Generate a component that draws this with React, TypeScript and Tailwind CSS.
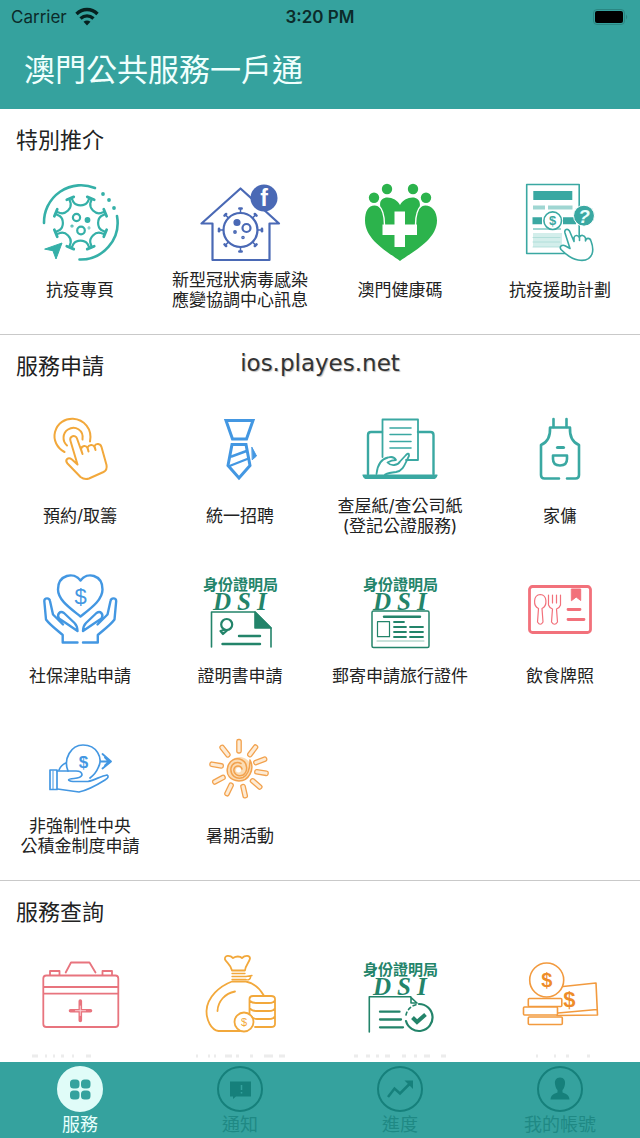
import type { ReactNode } from 'react';

const TEAL = '#3aa8a2';
const BLUE = '#4397e2';
const ORANGE = '#f2a83b';
const GREEN = '#23846a';
const RED = '#f2717b';

function Svg({ color, width = 1.8, children }: { color: string; width?: number; children: ReactNode }) {
  return (
    <svg
      viewBox="0 0 80 80"
      className="size-20 shrink-0 overflow-visible"
      fill="none"
      stroke={color}
      strokeWidth={width}
      strokeLinecap="round"
      strokeLinejoin="round"
      aria-hidden="true"
    >
      {children}
    </svg>
  );
}

function point(cx: number, cy: number, r: number, deg: number) {
  const a = (deg * Math.PI) / 180;
  return `${(cx + r * Math.cos(a)).toFixed(2)} ${(cy + r * Math.sin(a)).toFixed(2)}`;
}

function Dollar({ x, y, size, color, bold = true }: { x: number; y: number; size: number; color: string; bold?: boolean }) {
  return (
    <text
      x={x}
      y={y + size * 0.35}
      fontSize={size}
      textAnchor="middle"
      fill={color}
      stroke="none"
      fontFamily="Liberation Sans, sans-serif"
      fontWeight={bold ? 700 : 400}
    >
      $
    </text>
  );
}

function VirusPageIcon() {
  const cx = 40.5;
  const cy = 40;
  const angles = [0, 1, 2, 3, 4, 5, 6, 7].map((i) => 22.5 + i * 45);
  const body = angles
    .map((a) => `M${point(cx, cy, 26.5, a + 2.5)} L${point(cx, cy, 22, a + 4)} C${point(cx, cy, 17, a + 9)} ${point(cx, cy, 17, a + 36)} ${point(cx, cy, 22, a + 41)} L${point(cx, cy, 26.5, a + 42.5)}`)
    .join(' ');
  const caps = angles.map((a) => `M${point(cx, cy, 27, a - 8)} L${point(cx, cy, 27, a + 8)}`).join(' ');
  return (
    <Svg color="#35b0a8" width={2.2}>
      <path d="M4 40 A37 37 0 0 1 55 5" strokeWidth="2.600" />
      <path d="M77 33 A37 37 0 0 1 39.500 76.500" strokeWidth="2.600" />
      <path d={body} />
      <path d={caps} strokeWidth="2.800" />
      <circle cx="36.500" cy="34.500" r="3.600" />
      <circle cx="47.500" cy="37" r="1.800" fill="#35b0a8" />
      <circle cx="41" cy="47.500" r="3.800" />
      <circle cx="32" cy="43" r=".5" />
      <circle cx="49" cy="45" r=".3" />
      <path d="M5 66 L22 60 L16 76 L13 68 Z" fill="#35b0a8" strokeWidth="1" />
      <g fill="#35b0a8" stroke="none">
        <circle cx="63" cy="11" r="1.900" />
        <circle cx="69" cy="17" r="1.900" />
        <circle cx="74" cy="25" r="1.900" />
      </g>
    </Svg>
  );
}

function HouseVirusIcon() {
  const c = '#4a69b5';
  return (
    <Svg color={c} width={2.2}>
      <path d="M40.500 5.500 L1.500 40.500 H12.500 V77 H69.500 V40.500 H79 Z" />
      <circle cx="40.500" cy="47" r="17" />
      {[0, 45, 90, 135, 180, 225, 270, 315].map((a) => (
        <g key={a}>
          <path d={`M${point(40.5, 47, 17, a)} L${point(40.5, 47, 21, a)}`} strokeWidth="1.500" />
          <path d={`M${point(40.5, 47, 21.5, a - 3)} L${point(40.5, 47, 21.5, a + 3)}`} strokeWidth="2.600" />
        </g>
      ))}
      <circle cx="37" cy="39.500" r="2.500" fill={c} />
      <circle cx="46.500" cy="45" r="4" />
      <circle cx="35" cy="49" r=".8" />
      <circle cx="43" cy="54.500" r=".7" />
      <circle cx="64" cy="15" r="13.500" fill={c} stroke="none" />
      <text x="64" y="23" fontSize="23" fontWeight="700" textAnchor="middle" fill="#fff" stroke="none" fontFamily="Liberation Sans, sans-serif">
        f
      </text>
    </Svg>
  );
}

function HealthCodeIcon() {
  const c = '#2cb34c';
  return (
    <Svg color="#fff" width={2}>
      <g fill={c} stroke="none">
        <path d="M40 78 C28 69 5 57 5 37.500 C5 28 8.500 22.500 14.500 22.500 C17 22.500 19 23.500 20.500 25 C17 10 36 13 40 22 C44 13 63 10 59.500 25 C61 23.500 63 22.500 65.500 22.500 C71.500 22.500 77 28 77 37.500 C77 57 52 69 40 78 Z" />
        <circle cx="14" cy="14.700" r="5.200" />
        <circle cx="27" cy="6" r="5.200" />
        <circle cx="53" cy="6" r="5.200" />
        <circle cx="66" cy="14.700" r="5.200" />
      </g>
      <path d="M18 22 C23 26 24.500 32 24.500 42 M62 22 C57 26 55.500 32 55.500 42" strokeWidth="1.400" />
      <path d="M34.500 28.500 H45 V41.500 H57 V52 H45 V64 H34.500 V52 H22.500 V41.500 H34.500 Z" fill="#fff" stroke="none" />
    </Svg>
  );
}

function AidPlanIcon() {
  return (
    <Svg color={TEAL} width={1.6}>
      <rect x="6.700" y="1.500" width="52.500" height="69" />
      <rect x="13.300" y="8" width="39" height="9" fill={TEAL} stroke="none" />
      <g fill="#9fd6d2" stroke="none">
        <rect x="13" y="22.500" width="12" height="4" />
        <rect x="28" y="22.500" width="24.500" height="4" />
        <rect x="13" y="45" width="28" height="2" />
      </g>
      <path d="M12.500 37.800 H22 M43 37.800 H56" strokeWidth="7" strokeLinecap="butt" />
      <rect x="13" y="50" width="29" height="14" fill="#d3eeeb" stroke="none" />
      <path d="M13 54.500 H40 M13 59 H40 M13 64 H40" stroke="#a9dad6" strokeWidth=".8" />
      <circle cx="32.700" cy="37.700" r="8.800" fill="#fff" />
      <Dollar x={32.7} y={37.7} size={13} color={TEAL} />
      <circle cx="64" cy="32.700" r="10.500" fill={TEAL} stroke="#fff" strokeWidth="1" />
      <text x="64" y="39.500" fontSize="19" fontWeight="700" fontStyle="italic" textAnchor="middle" fill="#e9fffd" stroke="none" fontFamily="Liberation Sans, sans-serif">
        ?
      </text>
      <path
        d="M45 50 C44 46.500 47.500 45 49.500 48 L54 58.500 V54.500 C55 51.500 58.500 52 59.500 55 V57.500 V54 C61 51.500 64.500 52 65.500 55 V58 C66 54.500 70 54.500 71 58 C72.500 62 73.500 67 72 71 C70 76.500 64 78 58 77 C51 76 45.500 71 41 66.500 C39 63.500 42 61 45.500 63 L50 65.500 Z"
        fill="#fff"
      />
    </Svg>
  );
}

function TapIcon() {
  return (
    <Svg color={ORANGE} width={2}>
      <path d="M24.500 43 C17 39 13 31 15 23 C17.500 14 25 9.500 33 9.800 C44 10.500 52.500 20 50 32.500" />
      <path d="M27 36.500 C22 32 22.500 24 28 20.500 C35 16 44 21 42.500 30.500" />
      <path d="M37.500 55.500 L30.500 32 C29 27 35.500 25 37 29.500 L42.500 45 L41 40 C42 36.500 46 36 47.500 39 L48.500 42.500 L47.500 38.500 C49 35.500 53 35 54.500 38 L55.500 41 L54.500 37 C56 34 60.500 34.500 61.500 38 L66.500 56 Q67.500 61 63.500 63 L49 69.500 Q44.500 71 40.500 68 L27.500 54.500 C24.500 51 28 47.500 32 50.500 Z" />
    </Svg>
  );
}

function TieIcon() {
  return (
    <Svg color={BLUE} width={3}>
      <path d="M26 11.500 H53 L46.500 30 H32.500 Z" strokeLinejoin="miter" />
      <path d="M32 35.500 H46 L50 56.500 L39 69 L28 56.500 Z" strokeLinejoin="miter" />
      <path d="M31.500 47.500 L46.500 42 M29.500 57 L48.500 49.500" strokeWidth="2.400" />
      <path d="M52 38.500 L56.500 47 L52.500 50.500 Z" fill={BLUE} strokeWidth="1" />
    </Svg>
  );
}

function LandRecordIcon() {
  return (
    <Svg color={TEAL}>
      <path d="M22 23 H11 Q8 23 8 26 V65 M58 23 H70.500 Q73.500 23 73.500 26 V65" strokeWidth="2.400" />
      <path d="M22.500 48 V10.500 H58 V51 H46" />
      <path d="M30 19 H51 M30 25.500 H51 M30 32.500 H51 M30 39 H51" strokeWidth="1.600" />
      <path d="M3 66 H77 Q76 69.500 73 69.500 H7 Q4 69.500 3 66 Z" fill={TEAL} strokeWidth="1.200" />
      <path d="M16.500 65 C17.500 55 21 50 28 48.500 C33 47 35 49 36 51 C32 51 30 52 27.500 53.500 C31 57.500 38 56.500 40 52.500 L46 46 C49 43 50 45 48 49 C45 55 43 62 36 63 C31 63.500 28 64 25 65.500" />
    </Svg>
  );
}

function ApronIcon() {
  return (
    <Svg color={TEAL} width={2.6}>
      <path d="M33.500 10 V18 M46.500 10 V18" />
      <path d="M39 69.500 H24.500 Q21 69.500 21 66 V36 C28 33 30.500 27 30 18.500 H50 C49.500 27 52 33 59 36 V66 Q59 69.500 55.500 69.500 H47" />
      <path d="M37.500 38.500 H43.500" strokeWidth="3.200" />
      <path d="M33 46.500 H47 V50 Q47 56.500 40 56.500 Q33 56.500 33 50 Z" />
    </Svg>
  );
}

function BenefitIcon() {
  const hand =
    'M37.500 73.500 H22.700 V66 C17 61 10 56 6 50.500 L4.300 32 C4.500 28.500 9.500 28.500 10 32 L13 45.500 L23 55.500 M26.500 54.500 L19 49.500 C16.500 45 20 41.500 24 44 L34.500 54 C37 56.500 37.500 59 37.500 62 Z';
  return (
    <Svg color={BLUE} width={2.4}>
      <path d="M40.500 11.500 C34 2.500 18 5.500 18 20.500 C18 31 30 39 40.500 47.500 C51 39 62.500 31 62.500 20.500 C62.500 5.500 47 2.500 40.500 11.500 Z" />
      <Dollar x={40.5} y={27} size={22} color={BLUE} bold={false} />
      <path d={hand} />
      <path d={hand} transform="matrix(-1 0 0 1 80.500 0)" />
    </Svg>
  );
}

function DsiTitle({ lift = 0 }: { lift?: number }) {
  return (
    <g stroke="none" fill={GREEN}>
      <text x="40.500" y={20.5 - lift} fontSize="15" fontWeight="700" textAnchor="middle" fontFamily="Noto Sans CJK TC, sans-serif">
        身份證明局
      </text>
      <g fontSize="25" fontWeight="700" fontStyle="italic" fontFamily="Liberation Serif, serif">
        <text x="13" y={41 - lift}>D</text>
        <text x="37" y={41 - lift}>S</text>
        <text x="57" y={41 - lift}>I</text>
      </g>
    </g>
  );
}

function CertificateIcon() {
  return (
    <Svg color={GREEN} width={1.6}>
      <DsiTitle />
      <path d="M11.500 78 V43 H55 L71 59 V78" />
      <path d="M55 43 V59 H71 Z" fill={GREEN} />
      <circle cx="26.700" cy="55.500" r="5.500" strokeWidth="2.200" />
      <path d="M24 61 L20.500 62 L23 65 L27 61.500" strokeWidth="2.200" />
      <path d="M39 67 H60 M22.500 75 H60" strokeWidth="2.400" />
    </Svg>
  );
}

function TravelDocIcon() {
  return (
    <Svg color={GREEN} width={1.5}>
      <DsiTitle />
      <rect x="12" y="42" width="57" height="36.500" rx="1.500" />
      <path d="M24 47.700 H60" strokeWidth="2.400" />
      <rect x="17.500" y="52.700" width="12" height="15" strokeWidth="1.200" />
      <path d="M34 53 H44 M34 58 H46 M50 58 H63 M34 63 H46 M50 63 H63 M34 68 H46 M50 68 H63" strokeWidth="1.800" />
      <path d="M17 72 H64" strokeWidth=".5" />
    </Svg>
  );
}

function FoodLicenceIcon() {
  return (
    <Svg color={RED}>
      <rect x="9.500" y="17.500" width="61" height="46" rx="3" strokeWidth="2.800" />
      <path d="M51.700 20 H60.700 V31.500 L56.200 28 L51.700 31.500 Z" fill={RED} strokeWidth="1" />
      <path d="M48 40.500 H60 M48 50.500 H64" strokeWidth="2.800" />
      <g strokeWidth="1.200">
        <path d="M18.500 39.500 C13 37 13 26 20.300 25.500 C27.500 26 27.500 37 22 39.500 L23 53 Q20.300 57.500 17.500 53 Z" />
        <path d="M28.500 26 V36 Q29.500 39 32.500 40 L31.500 53 Q34.500 57.500 37.500 53 L36.500 40 Q39.500 39 40.500 36 V26 M32.500 26 V34 M36.500 26 V34" />
      </g>
    </Svg>
  );
}

function ProvidentFundIcon() {
  return (
    <Svg color={BLUE} width={1.7}>
      <rect x="10" y="41" width="7" height="19.500" />
      <path d="M13 42 V60" strokeWidth="1" />
      <path d="M17.300 42 H36 Q42 42 42 46 Q41 49 34 49.500 C27 50 27 51.500 33 52.500 H48 C55 51 61 47 67 46 Q70 48 65 51 C57 56 49 61 39 63 L17.500 60" />
      <path d="M28 42 C23 30 31 16 43 16 C57 16 63 29 58.500 38 C56.500 43 54 46 50 49" />
      <path d="M19 41 Q21 36 26 34" />
      <Dollar x={43.5} y={33.5} size={17} color={BLUE} />
      <path d="M62.500 25 L71 32.500 L62.500 39.500 M65 28.500 L69 32.500 L65 36.500 M61 32.500 H70" strokeWidth="1.800" />
    </Svg>
  );
}

function SummerIcon() {
  return (
    <Svg color="#f2a24e" width={1.3}>
      {[-90, -53, -21, 9, 41, 77, 116, 152, 190, 232].map((a) => (
        <rect key={a} x="16" y="-2.200" width="13.500" height="4.400" rx="1.800" fill="#fdebd5" transform={`translate(39 40) rotate(${a})`} />
      ))}
      <circle cx="39.500" cy="40" r="12" fill="#fbdcb4" stroke="none" />
      <path
        d="M50 31 C55 40 49 52 39 52 C30 51 26 46 27.500 39 C29 31 36 28 42 31 C48 34 48 43 43 46 C38 48 33 45 34 40 C35 36 41 36 42 40 M50 31 C50 36 50 45 43 48.500 C36 51 30 46 31 39 C32 34 37 32 41 34.500"
        strokeWidth="1.500"
      />
      <circle cx="38.500" cy="41" r="2.500" fill="#fff" stroke="none" />
    </Svg>
  );
}

function FirstAidIcon() {
  const c = '#e8747e';
  return (
    <Svg color={c}>
      <rect x="3.300" y="20.500" width="75" height="51.500" rx="3" />
      <path d="M4 32 H78 M4 38.700 H78" />
      <path d="M25.700 17.500 L31 7.500 H49.500 L55.500 17.500" />
      <path d="M10 20 V16 H19.500 V20 M62.500 20 V16 H72 V20" />
      <path d="M40.300 46 V65.500 M30.500 55.700 H50.500" strokeWidth="3.600" />
      <path d="M40.300 51 V60.500 M35.500 55.700 H45.500" strokeWidth=".9" stroke="#fbd5d8" />
    </Svg>
  );
}

function MoneyBagIcon() {
  return (
    <Svg color={ORANGE} width={1.8}>
      <path d="M32 15.500 C31 10 27 8 25 4.500 C24 0 30 0 33 3 C36 1 40 1 42 3 C45 0 50 0 50 3.500 C49 8 45.500 10 45 15.500 Z" />
      <path d="M32 18.500 H45 M32 21.500 H46 L52 20.500 M32 24.500 H46 Q50 26 51 21" strokeWidth="1.300" />
      <path d="M63.500 40 C59 32 53 28 46 26.500 H32 C20 31 7 42 6.500 56 C6.500 65 11 75 18.500 76 H40" />
      <path d="M17.500 56 C18 46 25 38.500 35 36.500" />
      <path d="M49.500 60 V44 Q49.500 41 53 41 H71 Q75 41 75 44 V69 Q75 72 71 72 H55 M50 46 Q52 48 56 48 H69 Q74 48 75 45 M50 53.500 Q52 56 56 56 H69 Q74 56 75 53 M51 61 Q53 64 57 64 H69 Q74 64 75 61" />
      <circle cx="44" cy="67" r="9.500" fill="#fff" />
      <Dollar x={44} y={67} size={11} color={ORANGE} bold={false} />
    </Svg>
  );
}

function ProgressDocIcon() {
  return (
    <Svg color={GREEN} width={1.6}>
      <DsiTitle lift={1} />
      <path d="M9.300 77 V41.700 H50 L57 48 H51 V42" />
      <path d="M20 56.700 H39.500 M20 64.500 H41 M20 72.300 H43" strokeWidth="2.300" />
      <path d="M59 49 A13.500 13.500 0 1 1 46 66" strokeWidth="2.200" />
      <path d="M46 60 A13.500 13.500 0 0 1 57 49.500" strokeDasharray="3 3" />
      <path d="M52.500 62.500 L57 67 L65.500 59.500" strokeWidth="4" strokeLinecap="butt" strokeLinejoin="miter" />
    </Svg>
  );
}

function CashIcon() {
  const c = '#f29a3e';
  return (
    <Svg color={c} width={1.6}>
      <path d="M43 31.500 L76 28 L77.500 60 L37 60.500 M38 58 L77 54.500" />
      <rect x="8.300" y="43.500" width="33.500" height="8" rx="1" fill="#fff" />
      <rect x="3.500" y="52" width="34" height="8" rx="1" fill="#fff" />
      <rect x="8.300" y="62" width="34" height="7.500" rx="1" fill="#fff" />
      <circle cx="26.700" cy="25" r="17" fill="#fff" />
      <Dollar x={26.7} y={25} size={20} color="#ee8c28" />
      <Dollar x={49.3} y={44.5} size={22} color="#ee8c28" />
    </Svg>
  );
}

type Service = { name: string; lines?: string[]; icon: ReactNode; ticks?: string };
type Section = { title: string; items: Service[] };

const sections: Section[] = [
  {
    title: '特別推介',
    items: [
      { name: '抗疫專頁', lines: ['抗疫專頁'], icon: <VirusPageIcon /> },
      { name: '新型冠狀病毒感染應變協調中心訊息', lines: ['新型冠狀病毒感染', '應變協調中心訊息'], icon: <HouseVirusIcon /> },
      { name: '澳門健康碼', lines: ['澳門健康碼'], icon: <HealthCodeIcon /> },
      { name: '抗疫援助計劃', lines: ['抗疫援助計劃'], icon: <AidPlanIcon /> },
    ],
  },
  {
    title: '服務申請',
    items: [
      { name: '預約/取籌', lines: ['預約/取籌'], icon: <TapIcon /> },
      { name: '統一招聘', lines: ['統一招聘'], icon: <TieIcon /> },
      { name: '查屋紙/查公司紙(登記公證服務)', lines: ['查屋紙/查公司紙', '(登記公證服務)'], icon: <LandRecordIcon /> },
      { name: '家傭', lines: ['家傭'], icon: <ApronIcon /> },
      { name: '社保津貼申請', lines: ['社保津貼申請'], icon: <BenefitIcon /> },
      { name: '證明書申請', lines: ['證明書申請'], icon: <CertificateIcon /> },
      { name: '郵寄申請旅行證件', lines: ['郵寄申請旅行證件'], icon: <TravelDocIcon /> },
      { name: '飲食牌照', lines: ['飲食牌照'], icon: <FoodLicenceIcon /> },
      { name: '非強制性中央公積金制度申請', lines: ['非強制性中央', '公積金制度申請'], icon: <ProvidentFundIcon /> },
      { name: '暑期活動', lines: ['暑期活動'], icon: <SummerIcon /> },
    ],
  },
  {
    title: '服務查詢',
    items: [
      { name: '急救箱', icon: <FirstAidIcon />, ticks: 'M32 12 h6 M45 12 h2 M53 12 h2 M61 12 h3 M72 12 h2 M86 12 h5' },
      { name: '錢袋', icon: <MoneyBagIcon />, ticks: 'M36 12 h2 M48 12 h2 M54 12 h2 M65 12 h7 M76 12 h3 M90 12 h3 M104 12 h9 M119 12 h6' },
      { name: '身份證明局', icon: <ProgressDocIcon />, ticks: 'M34 12 h4 M46 12 h4 M56 12 h3 M65 12 h5 M82 12 h4 M94 12 h3 M104 12 h6 M121 12 h5' },
      { name: '現金', icon: <CashIcon />, ticks: 'M56 12 h2 M74 12 h2 M86 12 h3 M107 12 h3' },
    ],
  },
];

function ServiceButton({ name, lines, icon, ticks }: Service) {
  return (
    <button type="button" aria-label={name} className="flex flex-col items-center gap-[7px]">
      {icon}
      <span className="flex h-10 w-full flex-col items-center justify-center text-[17px] leading-5 whitespace-nowrap text-[#222]">
        {lines?.map((line) => <span key={line}>{line}</span>)}
        {ticks && (
          <svg viewBox="20 0 160 40" className="h-10 w-40" fill="none" stroke="#ececec" strokeWidth="3" aria-hidden="true">
            <path d={ticks} transform="translate(20 2)" />
          </svg>
        )}
      </span>
    </button>
  );
}

function Tab({ label, active = false, children }: { label: string; active?: boolean; children: ReactNode }) {
  return (
    <button
      type="button"
      aria-current={active ? 'page' : undefined}
      className={active ? 'flex flex-col items-center text-[#e6fffc]' : 'flex flex-col items-center text-[#1f8984]'}
    >
      <svg viewBox="0 0 46 46" className="size-[46px]" fill="none" aria-hidden="true">
        <circle cx="23" cy="23" r="22" fill={active ? '#e0fcf8' : 'none'} stroke={active ? '#e0fcf8' : '#16807b'} strokeWidth="2" />
        {children}
      </svg>
      <span className="text-[18px] leading-[26px]">{label}</span>
    </button>
  );
}

export default function App() {
  return (
    <div className="relative flex h-screen flex-col bg-white font-['Inter','Noto_Sans_CJK_TC',sans-serif] text-[#222]">
      <header className="shrink-0 bg-[#35a29e]">
        <div className="grid h-[34px] grid-cols-3 items-center px-[11px] text-[17px] leading-5 text-[#0c2b2a]">
          <div className="flex items-center gap-2">
            <span>Carrier</span>
            <svg viewBox="0 0 24 20" className="h-5 w-6" fill="none" stroke="#06201f" strokeWidth="3.400" aria-hidden="true">
              <path d="M1.500 7 C7.500 1 16.500 1 22.500 7" />
              <path d="M5.500 11.500 C9.500 8 14.500 8 18.500 11.500" />
              <path d="M12 18.500 L8.500 14.700 Q12 12.300 15.500 14.700 Z" fill="#06201f" stroke="none" />
            </svg>
          </div>
          <span className="text-center font-semibold">3:20 PM</span>
          <svg viewBox="0 0 36 16" className="h-4 w-9 justify-self-end" aria-hidden="true">
            <rect x=".5" y=".5" width="31" height="15" rx="3.500" fill="none" stroke="#2b8682" />
            <rect x="2" y="2" width="28" height="12" rx="2" fill="#000" />
            <path d="M33 5.500 Q35.500 8 33 10.500 Z" fill="#2b8682" />
          </svg>
        </div>
        <h1 className="px-6 pt-3.5 pb-[17px] text-[31px] leading-[44px] font-normal text-[#f0fffd]">澳門公共服務一戶通</h1>
      </header>

      <main className="min-h-0 flex-1 overflow-hidden">
        {sections.map((section) => (
          <section key={section.title} className="border-b border-[#c9c9c9] pt-[15px] pb-[24px]">
            <h2 className="mb-[27px] px-4 text-[22px] leading-8 font-normal">{section.title}</h2>
            <div className="grid grid-cols-4 gap-y-[33px]">
              {section.items.map((item) => (
                <ServiceButton key={item.name} {...item} />
              ))}
            </div>
          </section>
        ))}
      </main>

      <p className="pointer-events-none absolute inset-x-0 top-[347px] text-center font-['DejaVu_Sans',sans-serif] text-[23px] leading-8 text-[#333] [text-shadow:1px_1px_1px_#bbb]">
        ios.playes.net
      </p>

      <nav className="grid shrink-0 grid-cols-4 bg-[#35a29e] pt-1">
        <Tab label="服務" active>
          <g fill="#35a29e">
            <rect x="13" y="13.500" width="9.500" height="9" rx="3.500" />
            <rect x="24" y="13.500" width="9.500" height="9" rx="3.500" />
            <rect x="13" y="24.500" width="9.500" height="9" rx="3.500" />
            <rect x="24" y="24.500" width="9.500" height="9" rx="3.500" />
          </g>
        </Tab>
        <Tab label="通知">
          <path d="M13 15.500 H34 V30.500 H19 L16 33 V30.500 H13 Z" fill="#16807b" />
          <path d="M24.500 19 V24 M24.500 26 V27.500" stroke="#35a29e" strokeWidth="1.500" />
        </Tab>
        <Tab label="進度">
          <path d="M11 31 L17.500 22.500 L23 27.500 L33 17.500" stroke="#16807b" strokeWidth="2.500" />
          <path d="M27.500 14.500 H36 V23 Z" fill="#16807b" />
        </Tab>
        <Tab label="我的帳號">
          <path
            d="M23 11.500 C27 11.500 28.500 14.500 28 18 C27.500 21.500 26.500 23 25.500 24 V26.500 C29 28 32 28.500 32.500 33.500 H13.500 C14 28.500 17 28 20.500 26.500 V24 C19.500 23 18.500 21.500 18 18 C17.500 14.500 19 11.500 23 11.500 Z"
            fill="#16807b"
          />
        </Tab>
      </nav>
    </div>
  );
}
